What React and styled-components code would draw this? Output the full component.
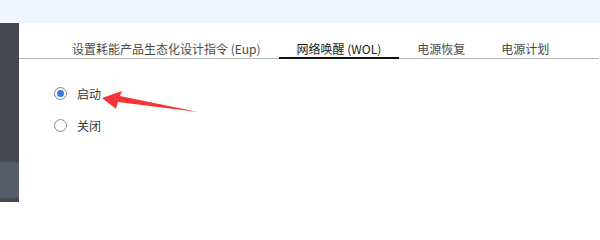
import React, { useState } from "react";
import styled, { createGlobalStyle } from "styled-components";

const Global = createGlobalStyle`
  html, body { margin: 0; padding: 0; background: #fff; }
  body { font-family: "Noto Sans CJK SC", "Noto Sans", sans-serif; }
  * { box-sizing: border-box; }
`;

const Page = styled.div`
  position: relative;
  width: 600px;
  height: 202px;
  display: flex;
  flex-direction: column;
  overflow: hidden;
`;

const TopBand = styled.div`
  height: 23px;
  background: #f0f5fe;
  flex: none;
`;

const Body = styled.div`
  flex: 1;
  display: flex;
`;

const Sidebar = styled.div`
  width: 19px;
  flex: none;
  display: flex;
  flex-direction: column;
  background: #46474f;
`;

const SideBlock = styled.div`
  height: ${(p) => p.$h}px;
  flex: ${(p) => (p.$h ? "none" : "1")};
  background: ${(p) => p.$bg};
`;

const Content = styled.div`
  flex: 1;
  display: flex;
  flex-direction: column;
  background: #fff;
`;

const TabBar = styled.div`
  display: flex;
  padding: 17px 0 0 35px;
  margin-right: 1px;
  border-bottom: 1px solid #b4b4b4;
`;

const Tab = styled.div`
  font-size: 12px;
  line-height: 17px;
  padding: 0 18px;
  margin-bottom: -1px;
  white-space: nowrap;
  color: ${(p) => (p.$active ? "#1a1a1a" : "#4a4a4a")};
  border-bottom: 2px solid ${(p) => (p.$active ? "#111" : "transparent")};
  cursor: pointer;
`;

const RadioList = styled.div`
  display: flex;
  flex-direction: column;
  padding: 18px 0 0 35px;
`;

const RadioRow = styled.label`
  display: flex;
  align-items: center;
  height: 32px;
  gap: 10px;
  font-size: 12px;
  color: #333;
  cursor: pointer;
`;

const RadioCircle = styled.span`
  width: 13px;
  height: 13px;
  border-radius: 50%;
  border: 1px solid ${(p) => (p.$checked ? "#8a8a8a" : "#8f8f8f")};
  background: #fff;
  display: flex;
  align-items: center;
  justify-content: center;
  box-shadow: inset 0 0 1px rgba(0, 0, 0, 0.15);
  &::after {
    content: "";
    width: 7px;
    height: 7px;
    border-radius: 50%;
    background: ${(p) => (p.$checked ? "#3b78de" : "transparent")};
  }
`;

const Annotation = styled.svg`
  position: absolute;
  left: 0;
  top: 0;
  pointer-events: none;
`;

const tabs = ["设置耗能产品生态化设计指令 (Eup)", "网络唤醒 (WOL)", "电源恢复", "电源计划"];

export default function App() {
  const [active, setActive] = useState(1);
  const [choice, setChoice] = useState("on");
  return (
    <Page>
      <Global />
      <TopBand />
      <Body>
        <Sidebar>
          <SideBlock $h={139} $bg="#46474f" />
          <SideBlock $h={36} $bg="#555b69" />
          <SideBlock $bg="#46474f" />
        </Sidebar>
        <Content>
          <TabBar>
            {tabs.map((t, i) => (
              <Tab key={t} $active={i === active} onClick={() => setActive(i)}>
                {t}
              </Tab>
            ))}
          </TabBar>
          <RadioList>
            <RadioRow onClick={() => setChoice("on")}>
              <RadioCircle $checked={choice === "on"} />
              启动
            </RadioRow>
            <RadioRow onClick={() => setChoice("off")}>
              <RadioCircle $checked={choice === "off"} />
              关闭
            </RadioRow>
          </RadioList>
        </Content>
      </Body>
      <Annotation width="600" height="202" viewBox="0 0 600 202">
        <polygon
          points="102,98 122,91 120,96 198,112 118,102 116,109"
          fill="#f53535"
        />
      </Annotation>
    </Page>
  );
}
